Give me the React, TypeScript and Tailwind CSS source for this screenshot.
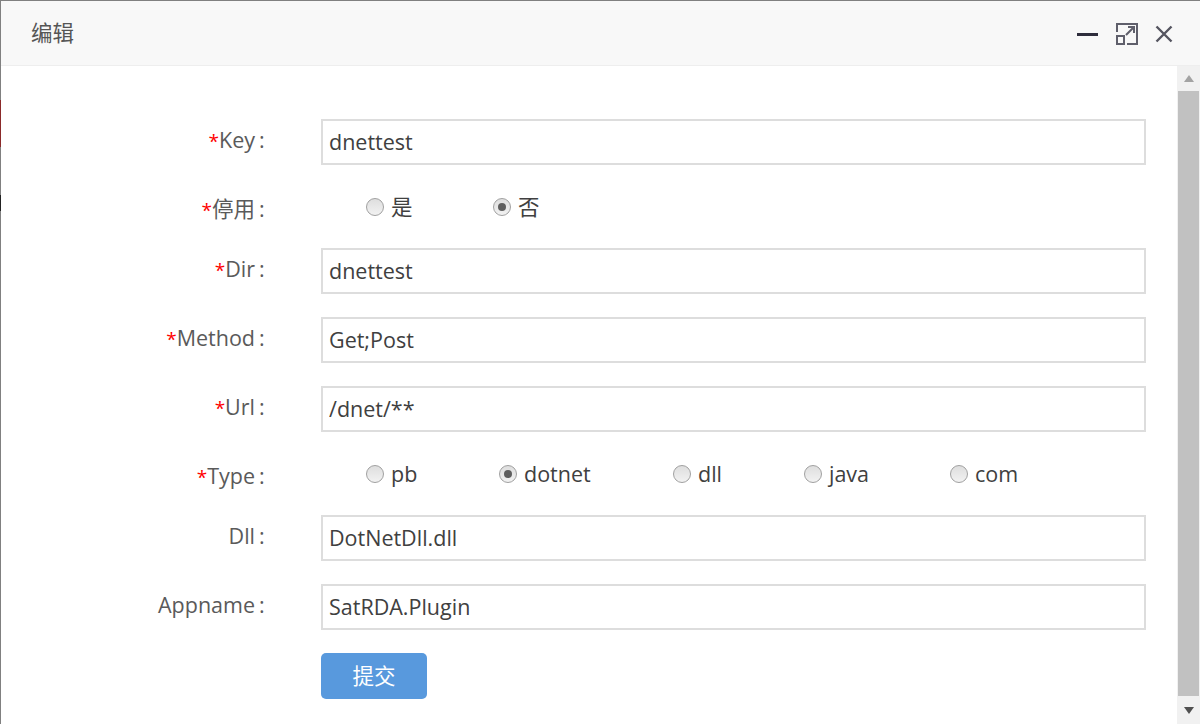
const fontStack = 'font-["Open_Sans","Noto_Sans_CJK_SC",sans-serif]'

function Label({ text, required }: { text: string; required?: boolean }) {
  return (
    <label className="w-[268px] text-right text-[21.5px] leading-[28px] text-[#5a5a5a] pt-[7px] self-start whitespace-nowrap">
      {required && <span className="text-[19px] text-[#f00]">*</span>}
      {text}
      <span className="inline-block w-[14px] pl-[4px] text-left">:</span>
    </label>
  )
}

function TextRow({ label, value, required }: { label: string; value: string; required?: boolean }) {
  return (
    <div className="flex mb-[23px]">
      <Label text={label} required={required} />
      <input
        readOnly
        value={value}
        className="ml-[52px] w-[825px] h-[46px] border-2 border-[#ddd] bg-white px-[6px] pb-[2px] text-[21.5px] text-[#404040] outline-none"
      />
    </div>
  )
}

function Radio({ text, checked, width }: { text: string; checked?: boolean; width: string }) {
  return (
    <span className={`flex items-center gap-[7px] text-[21.5px] leading-[28px] text-[#404040] ${width}`}>
      <span className="flex items-center justify-center w-[18px] h-[18px] rounded-full border border-[#a0a0a0] bg-gradient-to-b from-[#dedede] to-[#f2f2f2]">
        {checked && <span className="w-[8px] h-[8px] rounded-full bg-[#5f5f5f]" />}
      </span>
      {text}
    </span>
  )
}

export default function App() {
  return (
    <div className={`relative h-[724px] w-[1200px] bg-white border-t border-l border-[#808080] flex flex-col ${fontStack}`}>
      {/* 后面页面露出的部分 */}
      <div className="absolute -left-px top-[99px] w-px h-[47px] bg-[#8b2a2a]" />
      <div className="absolute -left-px top-[194px] w-px h-[16px] bg-[#222]" />

      {/* 标题栏 */}
      <div className="h-[65px] shrink-0 flex items-center justify-between bg-[#f8f8f8] border-b border-[#eee] pl-[30px] pr-[27px]">
        <span className="text-[21.5px] text-[#555]">编辑</span>
        <div className="flex items-center gap-[17px] mt-[2px]">
          <svg width="22" height="24" viewBox="0 0 22 24">
            <rect x="0" y="11" width="21" height="3" fill="#2e2d3c" />
          </svg>
          <svg width="22" height="22" viewBox="0 0 22 22" fill="none" stroke="#5f5f6b" strokeWidth="2">
            <path d="M1 9V1h20v20H11" />
            <rect x="1" y="13" width="7" height="8" />
            <path d="M10 12 18 4M12 4h6v6" />
          </svg>
          <svg width="18" height="18" viewBox="0 0 18 18" fill="none" stroke="#555560" strokeWidth="2.4">
            <path d="M1.5 1.5l15 15M16.5 1.5l-15 15" />
          </svg>
        </div>
      </div>

      <div className="flex-1 min-h-0 flex">
        {/* 表单 */}
        <form className="flex-1 pt-[53px]">
          <TextRow label="Key" value="dnettest" required />
          <div className="flex h-[37px] mb-[23px]">
            <Label text="停用" required />
            <div className="ml-[97px] flex h-[37px] items-center">
              <Radio text="是" width="w-[127px]" />
              <Radio text="否" checked width="w-[60px]" />
            </div>
          </div>
          <TextRow label="Dir" value="dnettest" required />
          <TextRow label="Method" value="Get;Post" required />
          <TextRow label="Url" value="/dnet/**" required />
          <div className="flex h-[37px] mb-[23px]">
            <Label text="Type" required />
            <div className="ml-[97px] flex h-[37px] items-center">
              <Radio text="pb" width="w-[133px]" />
              <Radio text="dotnet" checked width="w-[174px]" />
              <Radio text="dll" width="w-[131px]" />
              <Radio text="java" width="w-[146px]" />
              <Radio text="com" width="w-[80px]" />
            </div>
          </div>
          <TextRow label="Dll" value="DotNetDll.dll" />
          <TextRow label="Appname" value="SatRDA.Plugin" />
          <button type="button" className="ml-[320px] w-[106px] h-[46px] pt-[1px] rounded-[5px] bg-[#5899dd] text-white text-[21.5px]">
            提交
          </button>
        </form>

        {/* 滚动条 */}
        <div className="w-[23px] shrink-0 bg-[#f1f1f1] flex flex-col items-center">
          <div className="h-[25px] w-full flex items-center justify-center">
            <span className="w-0 h-0 border-x-[5px] border-x-transparent border-b-[7px] border-b-[#a3a3a3]" />
          </div>
          <div className="h-[605px] w-[21px] bg-[#c1c1c1]" />
          <div className="flex-1 w-full flex items-center justify-center">
            <span className="w-0 h-0 border-x-[5px] border-x-transparent border-t-[7px] border-t-[#505050]" />
          </div>
        </div>
      </div>
    </div>
  )
}
